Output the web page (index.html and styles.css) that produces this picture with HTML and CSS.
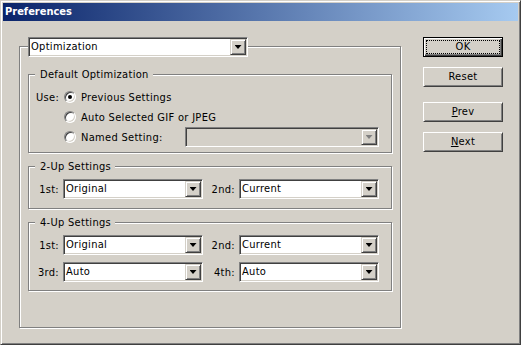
FILE: index.html
```html
<!DOCTYPE html>
<html>
<head>
<meta charset="utf-8">
<title>Preferences</title>
<link rel="stylesheet" href="styles.css">
</head>
<body>
<div class="window">
  <div class="titlebar">Preferences</div>
  <div class="content">
    <div class="mainbox">
      <div class="select sel-main"><span class="val">Optimization</span><span class="arrow"></span></div>

      <div class="group g-default">
        <div class="gtitle">Default Optimization</div>
        <div class="radio-grid">
          <span class="use">Use:</span>
          <span class="radio checked"></span>
          <span class="rlabel">Previous Settings</span>

          <span></span>
          <span class="radio"></span>
          <span class="rlabel">Auto Selected GIF or JPEG</span>

          <span></span>
          <span class="radio"></span>
          <span class="rlabel named"><span class="named-label">Named Setting:</span><span class="select disabled sel-named"><span class="val"></span><span class="arrow"></span></span></span>
        </div>
      </div>

      <div class="group g-2up">
        <div class="gtitle">2-Up Settings</div>
        <div class="pair-grid">
          <span class="plabel">1st:</span>
          <span class="select"><span class="val">Original</span><span class="arrow"></span></span>
          <span class="plabel">2nd:</span>
          <span class="select"><span class="val">Current</span><span class="arrow"></span></span>
        </div>
      </div>

      <div class="group g-4up">
        <div class="gtitle">4-Up Settings</div>
        <div class="pair-grid">
          <span class="plabel">1st:</span>
          <span class="select"><span class="val">Original</span><span class="arrow"></span></span>
          <span class="plabel">2nd:</span>
          <span class="select"><span class="val">Current</span><span class="arrow"></span></span>
          <span class="plabel">3rd:</span>
          <span class="select"><span class="val">Auto</span><span class="arrow"></span></span>
          <span class="plabel">4th:</span>
          <span class="select"><span class="val">Auto</span><span class="arrow"></span></span>
        </div>
      </div>
    </div>

    <div class="buttons">
      <div class="btn btn-ok"><span class="focus">OK</span></div>
      <div class="btn btn-reset">Reset</div>
      <div class="btn btn-prev"><u>P</u>rev</div>
      <div class="btn btn-next"><u>N</u>ext</div>
    </div>
  </div>
</div>
</body>
</html>
```

FILE: styles.css
```css
html, body {
  margin: 0;
  padding: 0;
}

body {
  background: #d4d0c8;
  font-family: "DejaVu Sans Condensed", "DejaVu Sans", sans-serif;
  font-stretch: condensed;
  font-size: 11px;
  letter-spacing: 0.3px;
  color: #000;
}

.window {
  width: 521px;
  height: 345px;
  box-sizing: border-box;
  border: 1px solid;
  border-color: #d4d0c8 #404040 #404040 #d4d0c8;
  box-shadow: inset 1px 1px 0 #fff, inset -1px -1px 0 #808080;
  padding: 2px;
  background: #d4d0c8;
}

.titlebar {
  height: 18px;
  line-height: 18px;
  padding-left: 2px;
  background: linear-gradient(to right, #0a246a, #a6caf0);
  color: #fff;
  font-weight: bold;
  letter-spacing: 0;
}

.content {
  display: flex;
  align-items: flex-start;
  padding: 16px 0 0 16px;
}

.mainbox {
  margin-top: 9px;
  width: 382px;
  height: 282px;
  box-sizing: border-box;
  border: 1px solid #808080;
  box-shadow: 1px 1px 0 #fff, inset 1px 1px 0 #fff;
  padding: 0 8px;
}

/* dropdowns */
.select {
  display: flex;
  height: 20px;
  box-sizing: border-box;
  background: #fff;
  border: 1px solid;
  border-color: #808080 #fff #fff #808080;
  box-shadow: inset 1px 1px 0 #404040, inset -1px -1px 0 #d4d0c8;
  padding: 1px;
}

.select .val {
  flex: 1;
  padding-left: 1px;
  line-height: 16px;
  white-space: nowrap;
  overflow: hidden;
}

.select .arrow {
  width: 16px;
  height: 16px;
  box-sizing: border-box;
  background: #d4d0c8;
  border: 1px solid;
  border-color: #d4d0c8 #404040 #404040 #d4d0c8;
  box-shadow: inset 1px 1px 0 #fff, inset -1px -1px 0 #808080;
  display: flex;
  align-items: center;
  justify-content: center;
}

.select .arrow::after {
  content: "";
  width: 7px;
  height: 4px;
  background: #000;
  clip-path: polygon(0 0, 100% 0, 50% 100%);
}

.select.disabled {
  background: #d4d0c8;
}

.select.disabled .arrow::after {
  background: #808080;
}

.sel-main {
  width: 220px;
  margin-top: -10px;
}

/* group boxes */
.group {
  width: 364px;
  box-sizing: border-box;
  border: 1px solid #808080;
  box-shadow: 1px 1px 0 #fff, inset 1px 1px 0 #fff;
}

.gtitle {
  width: fit-content;
  height: 13px;
  line-height: 13px;
  margin: -7px 0 0 6px;
  padding: 0 4px 0 5px;
  background: #d4d0c8;
  white-space: nowrap;
}

.g-default {
  margin-top: 17px;
  padding: 0 0 5px 0;
}

.g-2up {
  margin-top: 13px;
  padding: 0 0 9px 0;
}

.g-4up {
  margin-top: 13px;
  padding: 0 0 8px 0;
}

.radio-grid {
  margin-top: 6px;
  padding-left: 7px;
  display: grid;
  grid-template-columns: 28px 17px 1fr;
  grid-auto-rows: 20px;
  align-items: center;
}

.radio {
  width: 12px;
  height: 12px;
  box-sizing: border-box;
  border-radius: 50%;
  border: 1px solid;
  border-color: #808080 #fff #fff #808080;
  box-shadow: inset 1px 1px 0 #404040, inset -1px -1px 0 #d4d0c8;
  background: #fff;
  display: flex;
  align-items: center;
  justify-content: center;
}

.radio.checked::after {
  content: "";
  width: 4px;
  height: 4px;
  border-radius: 50%;
  background: #000;
}

.named {
  display: flex;
  align-items: center;
}

.named-label {
  width: 104px;
}

.sel-named {
  width: 194px;
}

.pair-grid {
  margin-top: 6px;
  display: grid;
  grid-template-columns: 34px 140px 36px 140px;
  grid-auto-rows: 20px;
  row-gap: 7px;
  align-items: center;
}

.plabel {
  text-align: right;
  padding-right: 4px;
}

/* buttons */
.buttons {
  display: flex;
  flex-direction: column;
  margin-left: 22px;
}

.btn {
  width: 80px;
  height: 20px;
  box-sizing: border-box;
  border: 1px solid;
  border-color: #fff #404040 #404040 #fff;
  box-shadow: inset 1px 1px 0 #d4d0c8, inset -1px -1px 0 #808080;
  background: #d4d0c8;
  text-align: center;
  line-height: 18px;
}

.btn-ok {
  border-color: #000;
  box-shadow: inset 1px 1px 0 #fff, inset -1px -1px 0 #404040, inset -2px -2px 0 #808080;
  padding: 2px;
  line-height: 12px;
}

.btn-ok .focus {
  display: block;
  height: 100%;
  box-sizing: border-box;
  border: 1px dotted #000;
}

.btn-reset {
  margin-top: 10px;
}

.btn-prev {
  margin-top: 15px;
}

.btn-next {
  margin-top: 10px;
}
```
